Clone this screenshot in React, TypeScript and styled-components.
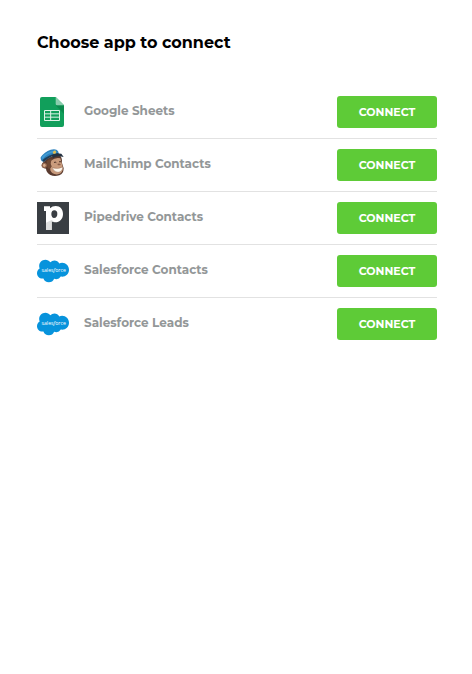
import React from "react";
import styled, { createGlobalStyle } from "styled-components";

const GlobalStyle = createGlobalStyle`
  *, *::before, *::after { box-sizing: border-box; }
  body {
    margin: 0;
    background: #ffffff;
    font-family: Montserrat, Inter, "Open Sans", sans-serif;
  }
`;

const Page = styled.main`
  padding: 32px 35px 32px 37px;
`;

const Title = styled.h1`
  margin: 0 0 32px;
  color: #000000;
  font-size: 16px;
  font-weight: 700;
  line-height: 22px;
`;

const AppList = styled.ul`
  margin: 0;
  padding: 0;
  list-style: none;
`;

const AppRow = styled.li`
  display: flex;
  align-items: center;
  gap: 15px;
  padding: 10px 0;
  border-bottom: 1px solid #e2e2e2;

  &:last-child {
    border-bottom: 0;
  }
`;

const Icon = styled.svg`
  flex: none;
  width: 32px;
  height: 32px;
`;

const AppName = styled.span`
  flex: 1;
  padding-bottom: 2px;
  color: #939798;
  font-size: 12px;
  font-weight: 700;
  line-height: 16px;
`;

const ConnectButton = styled.button`
  flex: none;
  width: 100px;
  height: 32px;
  padding: 0;
  border: 0;
  border-radius: 3px;
  background: #5ecb37;
  color: #ffffff;
  font: inherit;
  font-size: 11px;
  font-weight: 700;
  cursor: pointer;

  &:hover {
    background: #54ba30;
  }
`;

const Wordmark = styled.text`
  fill: #ffffff;
  font-family: "Open Sans", sans-serif;
  font-size: 3.9px;
  font-weight: 400;
  text-anchor: middle;
`;

const SheetsIcon = () => (
  <Icon viewBox="21 18 96 96" aria-hidden="true">
    <path d="M36 21H77L102 46V105Q102 111 96 111H36Q30 111 30 105V27Q30 21 36 21Z" fill="#119f5b" />
    <path d="M77 46H102V72Z" fill="#0c8a4d" />
    <path d="M77 21L102 46H82Q77 46 77 41Z" fill="#8acdad" />
    <path
      d="M43.5 61.5H88.5V91.5H43.5ZM43.5 71.5H88.5M43.5 81.5H88.5M62 61.5V91.5"
      fill="none"
      stroke="#dff3e8"
      strokeWidth="3"
    />
  </Icon>
);

const MailchimpIcon = () => (
  <Icon viewBox="21 24 96 96" aria-hidden="true">
    <path d="M42 62Q58 44 88 43Q97 48 96 66L101 82Q101 98 88 103Q73 108 61 102Q49 95 48 83Q34 81 35 72Q36 65 42 62Z" fill="#5a3b2f" />
    <path d="M62 59Q78 48 91 52L95 66L99 81Q99 96 84 100Q66 102 61 88Q59 80 65 76Q60 67 62 59Z" fill="#c99b7c" />
    <path d="M50 61Q58 53 66 53L61 68L64 78L57 84L52 79Z" fill="#6f4935" />
    <ellipse cx="43" cy="73" rx="8" ry="8" fill="#93664e" />
    <ellipse cx="43" cy="73" rx="4" ry="5" fill="#d8ad8e" />
    <path d="M67 80Q84 86 98 78Q98 92 84 94Q71 93 67 80Z" fill="#fff8ed" stroke="#7c5340" strokeWidth="1" />
    <path d="M72 65Q75 61 79 65M87 63Q90 60 93 63" fill="none" stroke="#4b3127" strokeWidth="3" />
    <path d="M82 69Q87 66 92 70L91 73H84Z" fill="#8a5d47" />
    <path d="M32 49Q43 32 62 26Q79 22 84 30L87 39Q59 38 37 62Q31 58 32 49Z" fill="#2e82bd" />
    <path d="M35 49Q49 32 76 28L79 33Q51 35 38 54Z" fill="#419bd3" />
    <path d="M37 58Q56 40 84 36L87 42Q61 43 41 64Z" fill="#203e57" />
    <path d="M65 43Q77 36 94 38L101 48Q82 42 69 51Z" fill="#253241" />
    <path d="M68 33L75 28L79 33L76 38L70 38Z" fill="#e3be4d" />
  </Icon>
);

const PipedriveIcon = () => (
  <Icon viewBox="21 30 96 96" aria-hidden="true">
    <path d="M21 30H117V126H21Z" fill="#393e43" />
    <path
      d="M42 43H60V49Q67 42 77 42C91 42 99 52 99 66C99 81 89 91 76 91Q69 91 65 87V114H48V57H42ZM73 55C67 55 64 60 64 66C64 73 67 78 72 78C79 78 82 73 82 66C82 59 79 55 73 55Z"
      fill="#ffffff"
      fillRule="evenodd"
    />
    <path d="M48 92L65 84L74 91Q69 91 65 87V114H48Z" fill="#dedfdf" />
  </Icon>
);

const SalesforceIcon = () => (
  <Icon viewBox="0 0 24 24" aria-hidden="true">
    <path
      d="M10.006 5.415a4.195 4.195 0 013.045-1.306c1.56 0 2.954.9 3.69 2.205.63-.3 1.35-.45 2.1-.45 2.85 0 5.159 2.34 5.159 5.22s-2.311 5.22-5.176 5.22c-.345 0-.69-.044-1.02-.104a3.75 3.75 0 01-3.3 1.95c-.6 0-1.155-.15-1.65-.375A4.314 4.314 0 018.88 20.4a4.302 4.302 0 01-4.05-2.82c-.27.062-.54.076-.825.076C1.801 17.656 0 15.856 0 13.606c0-1.5.811-2.805 2.01-3.51-.255-.57-.39-1.2-.39-1.846 0-2.58 2.1-4.65 4.65-4.65 1.53 0 2.85.705 3.72 1.8"
      fill="#0793dc"
    />
    <Wordmark x="12.5" y="13">
      sales<tspan fontStyle="italic">f</tspan>orce
    </Wordmark>
  </Icon>
);

const apps = [
  { name: "Google Sheets", Logo: SheetsIcon },
  { name: "MailChimp Contacts", Logo: MailchimpIcon },
  { name: "Pipedrive Contacts", Logo: PipedriveIcon },
  { name: "Salesforce Contacts", Logo: SalesforceIcon },
  { name: "Salesforce Leads", Logo: SalesforceIcon },
];

export default function App() {
  return (
    <>
      <GlobalStyle />
      <Page>
        <Title>Choose app to connect</Title>
        <AppList>
          {apps.map(({ name, Logo }) => (
            <AppRow key={name}>
              <Logo />
              <AppName>{name}</AppName>
              <ConnectButton type="button" aria-label={`Connect ${name}`}>
                CONNECT
              </ConnectButton>
            </AppRow>
          ))}
        </AppList>
      </Page>
    </>
  );
}
